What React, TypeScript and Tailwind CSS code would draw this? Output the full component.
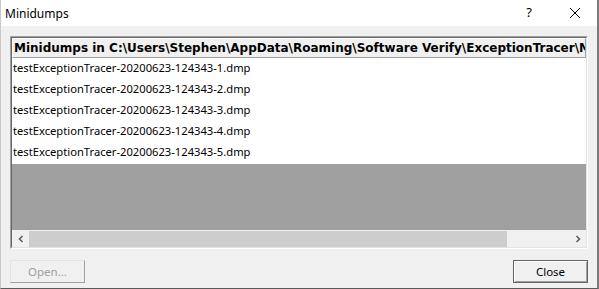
import React from "react";

const files = [1, 2, 3, 4, 5].map((n) => `testExceptionTracer-20200623-124343-${n}.dmp`);

export default function App() {
  return (
    <div
      className="w-[599px] h-[289px] flex flex-col bg-[#f0f0f0] border-l border-r-2 border-b border-l-[#c8c8c8] border-r-[#7a7a7a] border-b-[#5a5a5a] overflow-hidden"
      style={{ fontFamily: '"Segoe UI", "Noto Sans", "Open Sans", sans-serif' }}
    >
      {/* Title bar */}
      <div className="h-[26px] bg-white flex items-center shrink-0 text-[12px] text-black">
        <span className="pl-[4px] pt-[1px] flex-1">Minidumps</span>
        <span className="w-[20px] text-center mr-[30px] text-[13px]">?</span>
        <svg width="12" height="12" viewBox="0 0 12 12" className="mr-[16px]">
          <path d="M1 1 L11 11 M11 1 L1 11" stroke="#000" strokeWidth="1" />
        </svg>
      </div>

      {/* Client area */}
      <div className="flex-1 flex flex-col px-[9px] pt-[10px] pb-[6px]">
        {/* List frame */}
        <div className="h-[213px] flex flex-col border border-t-[#a0a0a0] border-l-[#a0a0a0] border-r-white border-b-white">
          <div className="flex-1 flex flex-col border border-t-[#696969] border-l-[#696969] border-r-[#e3e3e3] border-b-[#e3e3e3] overflow-hidden">
            {/* Header */}
            <div className="h-[20px] shrink-0 flex items-center bg-[#f0f0f0] border-t border-l border-white border-b border-b-[#a0a0a0] border-r border-r-[#a0a0a0] overflow-hidden whitespace-nowrap">
              <span
                className="pl-[1px] font-bold text-[12px] text-black"
                style={{ fontFamily: '"DejaVu Sans", Verdana, sans-serif' }}
              >
                Minidumps in C:\Users\Stephen\AppData\Roaming\Software Verify\ExceptionTracer\Minidumps
              </span>
            </div>
            {/* Rows */}
            <div className="bg-white flex flex-col shrink-0">
              {files.map((f) => (
                <div key={f} className="h-[21px] flex items-center pl-[1px] text-[11.2px] text-black whitespace-nowrap">
                  {f}
                </div>
              ))}
            </div>
            {/* Empty area */}
            <div className="flex-1 bg-[#a0a0a0] border-t border-white" />
            {/* Horizontal scrollbar */}
            <div className="h-[17px] shrink-0 flex bg-[#f0f0f0] border-t border-[#f0f0f0]">
              <div className="w-[17px] flex items-center justify-center">
                <svg width="8" height="8" viewBox="0 0 8 8">
                  <path d="M5.5 1 L2.5 4 L5.5 7" stroke="#606060" strokeWidth="1.6" fill="none" />
                </svg>
              </div>
              <div className="w-[478px] bg-[#cdcdcd]" />
              <div className="flex-1" />
              <div className="w-[17px] flex items-center justify-center">
                <svg width="8" height="8" viewBox="0 0 8 8">
                  <path d="M2.5 1 L5.5 4 L2.5 7" stroke="#606060" strokeWidth="1.6" fill="none" />
                </svg>
              </div>
            </div>
          </div>
        </div>

        {/* Buttons */}
        <div className="flex justify-between mt-[11px]">
          <button className="w-[75px] h-[23px] bg-[#f0f0f0] border border-t-[#e3e3e3] border-l-[#e3e3e3] border-r-[#a0a0a0] border-b-[#a0a0a0] text-[11.5px] text-[#a0a0a0] flex items-center justify-center">
            Open...
          </button>
          <button className="w-[75px] h-[23px] bg-[#f0f0f0] border border-[#646464] shadow-[inset_1px_1px_0_#ffffff,inset_-1px_-1px_0_#a0a0a0] text-[11.5px] text-black flex items-center justify-center">
            Close
          </button>
        </div>
      </div>
    </div>
  );
}
